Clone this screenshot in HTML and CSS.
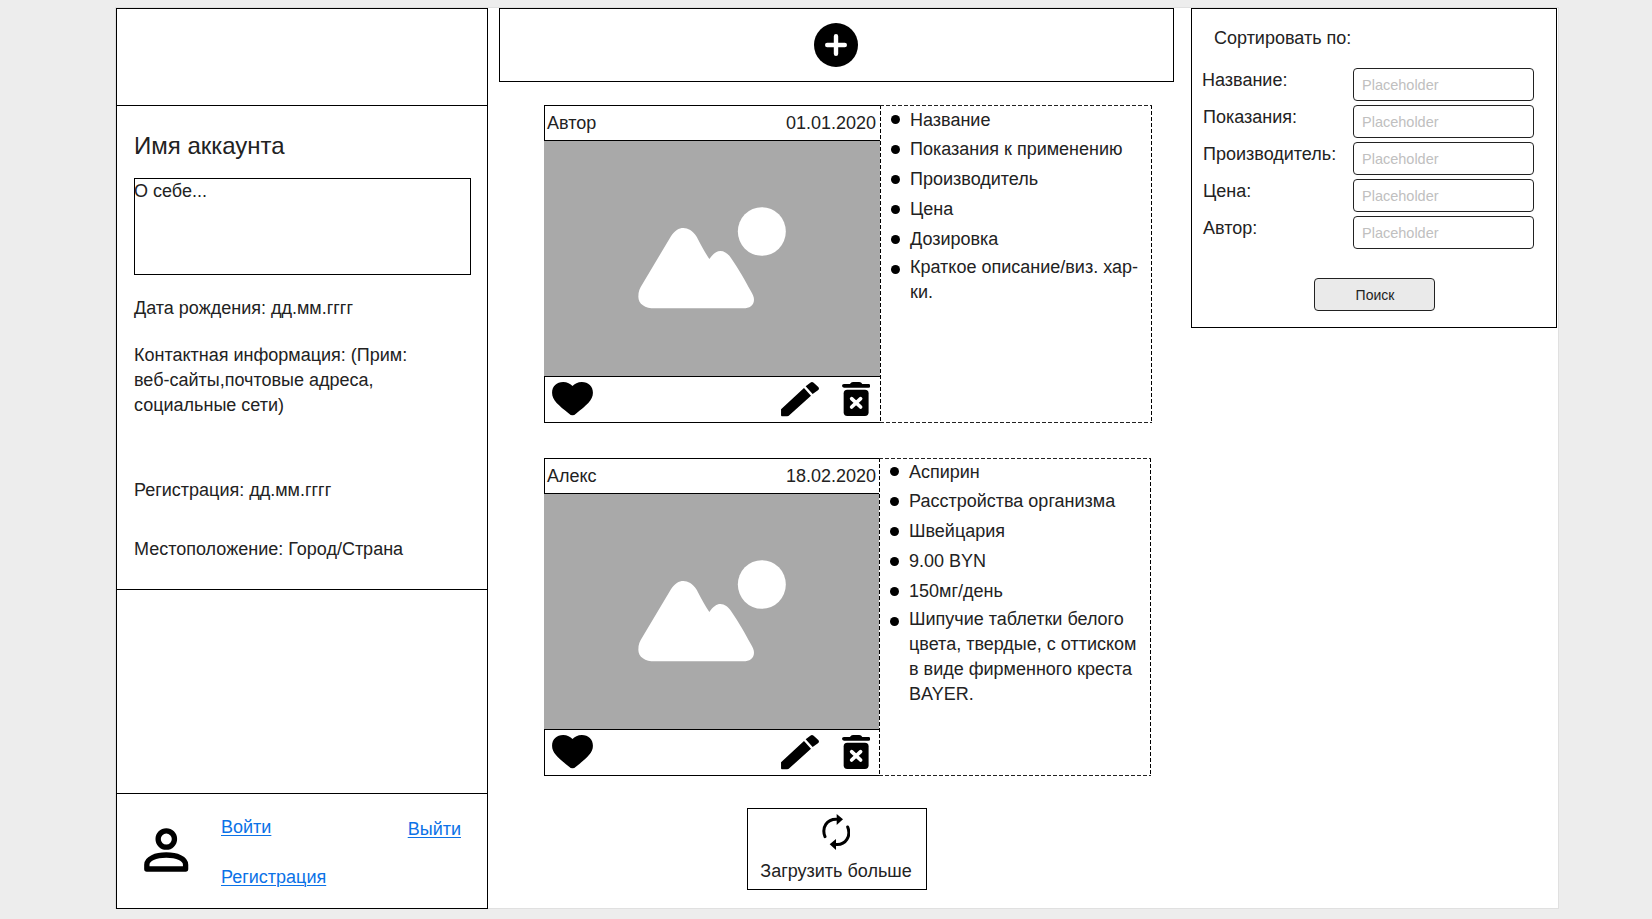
FILE: index.html
```html
<!DOCTYPE html>
<html lang="ru">
<head>
<meta charset="utf-8">
<title>Лента</title>
<link rel="stylesheet" href="styles.css">
</head>
<body>
<svg class="defs" width="0" height="0">
  <symbol id="heart" viewBox="0 0 122 100"><path d="M61 100C57 100 54 97 50 94C20 70 0 54 0 32C0 13 14 0 33 0C45 0 55 5 61 12C67 5 77 0 89 0C108 0 122 13 122 32C122 54 102 70 72 94C68 97 65 100 61 100Z"/></symbol>
  <symbol id="pencil" viewBox="48 28 114 104"><path d="M48 110L117 46L138 69L72 129Q69 132 65 132H52Q48 132 48 128ZM122 41L136 30Q141 26 146 30L160 43Q164 48 160 52L143 64Z"/></symbol>
  <symbol id="trash" viewBox="229 30 86 102"><path d="M253 36Q256 30 262 30H281Q287 30 290 36H309Q315 36 315 41.500T309 47H235Q229 47 229 41.500T235 36Z"/><rect x="234" y="53" width="75" height="79" rx="11"/><path d="M258 80L285 105M285 80L258 105" fill="none" stroke="#fff" stroke-width="11" stroke-linecap="round"/></symbol>
  <symbol id="picture" viewBox="0 0 336 235" preserveAspectRatio="xMinYMin slice"><g transform="translate(86 59) scale(.33333)"><path d="M25 290C25 275 29 265 37 253L122 110C134 91 147 84 160 84C174 84 188 92 200 110Q223 155 238 177C250 160 260 153 271 153C284 153 295 162 303 174C328 210 345 242 362 272C369 284 372 290 372 299C372 316 358 325 340 325H75C45 325 25 312 25 290Z"/><ellipse cx="395.500" cy="94.500" rx="72" ry="73"/></g></symbol>
</svg>
<div class="page">
  <aside class="sidebar">
    <div class="banner"></div>
    <section class="profile">
      <h1>Имя аккаунта</h1>
      <div class="about">О себе...</div>
      <p class="birth">Дата рождения: дд.мм.гггг</p>
      <p class="contacts">Контактная информация: (Прим: веб-сайты,почтовые адреса, социальные сети)</p>
      <p class="registered">Регистрация: дд.мм.гггг</p>
      <p class="location">Местоположение: Город/Страна</p>
    </section>
    <div class="spacer"></div>
    <nav class="account">
      <svg class="user" viewBox="133 176 134 132" width="44.600" height="44"><g fill="none" stroke="#000" stroke-width="16" stroke-linejoin="round"><circle cx="200" cy="209" r="24.500"/><path d="M141.500 299V286C141.500 268 168 257 200 257C232 257 258 268 258 286V299Z"/></g></svg>
      <div class="links"><a href="#">Войти</a><a href="#">Регистрация</a></div>
      <a class="logout" href="#">Выйти</a>
    </nav>
  </aside>

  <main class="feed">
    <div class="add">
      <svg width="44" height="44" viewBox="0 0 44 44"><circle cx="22" cy="22" r="22"/><path d="M22 13.200V30.800M13.200 22H30.800" stroke="#fff" stroke-width="4.400" stroke-linecap="round"/></svg>
    </div>
    <article class="card">
      <div class="post">
        <header><span>Автор</span><time>01.01.2020</time></header>
        <svg class="photo"><use href="#picture"/></svg>
        <footer><svg class="heart"><use href="#heart"/></svg><svg class="pencil"><use href="#pencil"/></svg><svg class="trash"><use href="#trash"/></svg></footer>
      </div>
      <ul class="facts">
        <li><span>Название</span></li>
        <li><span>Показания к применению</span></li>
        <li><span>Производитель</span></li>
        <li><span>Цена</span></li>
        <li><span>Дозировка</span></li>
        <li><span>Краткое описание/виз. хар-ки.</span></li>
      </ul>
    </article>
    <article class="card narrow">
      <div class="post">
        <header><span>Алекс</span><time>18.02.2020</time></header>
        <svg class="photo"><use href="#picture"/></svg>
        <footer><svg class="heart"><use href="#heart"/></svg><svg class="pencil"><use href="#pencil"/></svg><svg class="trash"><use href="#trash"/></svg></footer>
      </div>
      <ul class="facts">
        <li><span>Аспирин</span></li>
        <li><span>Расстройства организма</span></li>
        <li><span>Швейцария</span></li>
        <li><span>9.00 BYN</span></li>
        <li><span>150мг/день</span></li>
        <li><span>Шипучие таблетки белого цвета, твердые, с оттиском в виде фирменного креста BAYER.</span></li>
      </ul>
    </article>
    <div class="more">
      <svg width="28.700" height="36" viewBox="875 342 86 108"><g fill="none" stroke="#000" stroke-width="9" stroke-linecap="round"><path d="M884 410C873 382 890 357 918 357.500"/><path d="M952 381C963 409 946 435 918 433.500"/></g><path d="M919 342L938 358L919 375ZM917 417V450L898 433Z"/></svg>
      <span>Загрузить больше</span>
    </div>
  </main>

  <form class="filter">
    <h2>Сортировать по:</h2>
    <label class="first"><span>Название:</span><input placeholder="Placeholder"></label>
    <label><span>Показания:</span><input placeholder="Placeholder"></label>
    <label><span>Производитель:</span><input placeholder="Placeholder"></label>
    <label><span>Цена:</span><input placeholder="Placeholder"></label>
    <label><span>Автор:</span><input placeholder="Placeholder"></label>
    <button type="button">Поиск</button>
  </form>
</div>
</body>
</html>
```
FILE: styles.css
```css
* { box-sizing: border-box; }
body { margin: 0; height: 919px; overflow: hidden; background: #ededed; color: #222; font: 18px/25px "Liberation Sans", Arial, sans-serif; }
h1, h2, p, ul { margin: 0; padding: 0; font-weight: 400; }
svg { display: block; flex: none; }
.defs { position: absolute; }
a { color: #0b72e7; text-decoration: underline; text-decoration-thickness: 1px; text-underline-offset: 2px; }

.page { display: flex; align-items: flex-start; width: 1444px; height: 902px; margin: 7px 0 0 115px; background: #fff; border: 1px solid #e0e0e0; }

.sidebar { flex: none; width: 372px; height: 901px; display: flex; flex-direction: column; border: 1px solid #000; background: #fff; }
.banner { height: 97px; border-bottom: 1px solid #000; }
.profile { height: 484px; padding: 23px 16px 0 17px; border-bottom: 1px solid #000; }
.profile h1 { font-size: 24px; line-height: 34px; }
.about { width: 337px; height: 97px; margin-top: 15px; border: 1px solid #000; line-height: 25px; text-indent: -1px; }
.birth { margin-top: 21px; }
.contacts { width: 300px; margin-top: 22px; }
.registered { margin-top: 60px; }
.location { margin-top: 34px; }
.spacer { height: 204px; border-bottom: 1px solid #000; }
.account { flex: 1; display: flex; align-items: flex-start; padding: 21px 26px 0 27px; }
.user { margin-top: 13px; }
.links { display: flex; flex-direction: column; gap: 25px; margin-left: 32.400px; }
.logout { margin: 2px 0 0 auto; }

.feed { flex: none; width: 675px; margin-left: 11px; }
.add { width: 675px; height: 74px; display: flex; justify-content: center; padding: 14px 2px 0 0; border: 1px solid #000; }
.card { display: flex; margin: 23px 0 0 45px; height: 318px; }
.card.narrow { margin-top: 35px; }
.post { width: 336px; border-left: 1px solid #000; border-bottom: 1px solid #000; border-top: 1px solid #000; }
.narrow .post { width: 335px; }
.post header { height: 35px; display: flex; justify-content: space-between; padding: 5px 4px 0 2px; border-bottom: 1px solid #000; }
.narrow .post header { padding-right: 3px; }
.photo { width: 336px; height: 235px; margin-left: -1px; background: #a9a9a9; fill: #fff; }
.narrow .photo { width: 335px; }
.post footer { height: 46px; display: flex; padding: 5px 0 0 7px; border-top: 1px solid #000; }
.heart { width: 41px; height: 33.500px; }
.pencil { width: 38px; height: 34.600px; margin-left: 188px; }
.trash { width: 28.600px; height: 34px; margin-left: 22.700px; }
.facts {
  width: 272px; height: 318px; padding-left: 11px; list-style: none;
  background:
    repeating-linear-gradient(90deg, #222 0 4px, #fff 4px 6px) 0 0 / 100% 1px no-repeat,
    repeating-linear-gradient(90deg, #222 0 4px, #fff 4px 6px) 0 100% / 100% 1px no-repeat,
    repeating-linear-gradient(#000 0 4px, #fff 4px 6px) 0 0 / 1px 100% no-repeat,
    repeating-linear-gradient(#000 0 4px, #fff 4px 6px) 100% 0 / 1px 100% no-repeat;
}
.facts li { display: flex; height: 30px; padding-top: 2px; }
.facts li:first-child { padding-top: 3px; }
.facts li::before { content: ""; flex: none; width: 9px; height: 9px; margin: 8px 10px 0 0; border-radius: 50%; background: #000; }
.facts li:first-child::before { margin-top: 7px; }
.narrow .facts li { padding-top: 1px; }
.narrow .facts li:first-child { padding-top: 2px; }
.facts li span { width: 232px; }
.facts li:last-child span { margin-top: -2px; }
.more { width: 180px; height: 82px; margin: 32px 0 0 248px; display: flex; flex-direction: column; align-items: center; gap: 9px; padding: 5px 2px 0 0; border: 1px solid #000; }

.filter { flex: none; width: 366px; height: 320px; margin-left: 17px; padding: 17px 22px 0 11px; border: 1px solid #000; background: #fff; }
.filter h2 { margin: 0 0 17px 11px; font-size: 18px; line-height: 25px; }
.filter label { display: flex; justify-content: space-between; height: 37px; }
.filter .first span { margin-left: -1px; }
.filter input { width: 181px; height: 33px; padding: 1px 8px 0; border: 1px solid #222; border-radius: 4px; background: #fff; font: 14.500px "Liberation Sans", Arial, sans-serif; }
.filter input::placeholder { color: #c0c0c0; }
.filter button { display: block; width: 121px; height: 33px; margin: 25px 0 0 111px; padding: 1px 0 0 1px; border: 1px solid #222; border-radius: 4px; background: #eaeaea; color: #222; font: 14px "Liberation Sans", Arial, sans-serif; }
```
